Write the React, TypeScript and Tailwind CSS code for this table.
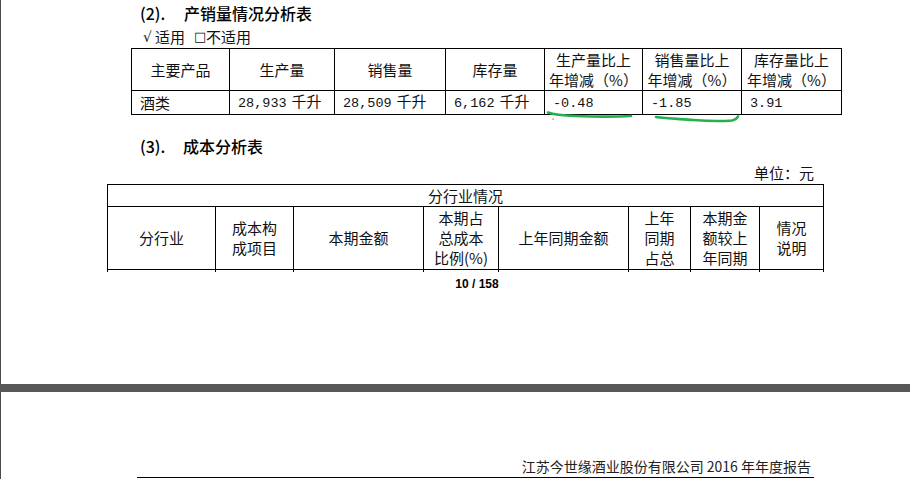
export default function App() {
  const cjk = "font-['Noto_Sans_CJK_SC',sans-serif]";
  const mono = "font-['Liberation_Mono','Noto_Sans_CJK_SC',monospace] text-[13.5px]";
  const th = "border border-black text-center align-middle font-normal p-0 leading-[20px]";
  const td = "border border-black text-left align-middle p-0 pl-[8px] whitespace-nowrap";
  const unit = <span className="text-[15px] ml-[5px]">千升</span>;
  return (
    <div className={`w-[910px] h-[479px] overflow-hidden bg-white text-[#111] ${cjk}`}>
      <div className="relative h-[384px] border-l border-[#4a4a4a]">
        <div className="pt-[3px] pl-[139px] h-[23px] leading-[20px] text-[16px] font-medium text-black flex">
          <span className="w-[44px]">(2).</span>
          <span>产销量情况分析表</span>
        </div>
        <div className="mt-[4px] pl-[142px] h-[20px] leading-[20px] text-[15px] flex items-center">
          <span className="w-[12px] text-[14px] font-['DejaVu_Sans',sans-serif]">√</span>
          <span>适用</span>
          <span className="ml-[9px] w-[12px] text-[13px] font-['DejaVu_Sans',sans-serif]">□</span>
          <span>不适用</span>
        </div>
        <table className="mt-[1px] ml-[130px] border-collapse table-fixed w-[710px] text-[15px] text-[#111]">
          <colgroup>
            <col className="w-[98px]" />
            <col className="w-[105px]" />
            <col className="w-[111px]" />
            <col className="w-[99px]" />
            <col className="w-[98px]" />
            <col className="w-[99px]" />
            <col className="w-[100px]" />
          </colgroup>
          <tbody>
            <tr className="h-[42px]">
              <th className={th}>主要产品</th>
              <th className={th}>生产量</th>
              <th className={th}>销售量</th>
              <th className={th}>库存量</th>
              <th className={th}>生产量比上<br />年增减（%）</th>
              <th className={th}>销售量比上<br />年增减（%）</th>
              <th className={th}>库存量比上<br />年增减（%）</th>
            </tr>
            <tr className="h-[22px] leading-[20px]">
              <td className={td}><span className="text-[15px]">酒类</span></td>
              <td className={td}><span className={mono}>28,933</span>{unit}</td>
              <td className={td}><span className={mono}>28,509</span>{unit}</td>
              <td className={td}><span className={mono}>6,162</span>{unit}</td>
              <td className={td}><span className={mono}>-0.48</span></td>
              <td className={td}><span className={mono}>-1.85</span></td>
              <td className={td}><span className={mono}>3.91</span></td>
            </tr>
          </tbody>
        </table>
        <div className="mt-[21px] pl-[139px] h-[20px] leading-[20px] text-[16px] font-medium text-black flex">
          <span className="w-[43px]">(3).</span>
          <span>成本分析表</span>
        </div>
        <div className="mt-[8px] h-[20px] leading-[18px] w-[813px] text-right text-[15px]">单位：元</div>
        <table className="ml-[106px] border-collapse table-fixed w-[716px] text-[15px] text-[#111]">
          <colgroup>
            <col className="w-[108px]" />
            <col className="w-[78px]" />
            <col className="w-[130px]" />
            <col className="w-[75px]" />
            <col className="w-[130px]" />
            <col className="w-[62px]" />
            <col className="w-[69px]" />
            <col className="w-[64px]" />
          </colgroup>
          <tbody>
            <tr className="h-[22px]">
              <th colSpan={8} className={th}>分行业情况</th>
            </tr>
            <tr className="h-[63px]">
              <th className={th}>分行业</th>
              <th className={th}>成本构<br />成项目</th>
              <th className={th}>本期金额</th>
              <th className={`${th} leading-[20.5px]`}>本期占<br />总成本<br />比例(%)</th>
              <th className={th}>上年同期金额</th>
              <th className={`${th} leading-[20.5px]`}>上年<br />同期<br />占总</th>
              <th className={`${th} leading-[20.5px]`}>本期金<br />额较上<br />年同期</th>
              <th className={th}>情况<br />说明</th>
            </tr>
            <tr className="h-[2px]">
              <td className="border-x border-black p-0"></td>
              <td className="border-x border-black p-0"></td>
              <td className="border-x border-black p-0"></td>
              <td className="border-x border-black p-0"></td>
              <td className="border-x border-black p-0"></td>
              <td className="border-x border-black p-0"></td>
              <td className="border-x border-black p-0"></td>
              <td className="border-x border-black p-0"></td>
            </tr>
          </tbody>
        </table>
        <div className="mt-[4px] h-[16px] leading-[16px] w-[952px] text-center text-[12px] font-bold text-black font-['Liberation_Sans',sans-serif]">10 / 158</div>
        <svg className="absolute left-0 top-0 pointer-events-none" width="910" height="130" viewBox="0 0 910 130">
          <path d="M547 112.5 C552 114.5 560 115.5 575 116 C595 116.8 615 116.8 630 116" fill="none" stroke="#22b14c" strokeWidth="2.6" strokeLinecap="round" />
          <path d="M655 117 C665 118.5 680 119 692 120 C705 121 720 121.5 731 120.5 C734 120 736 118.5 737 116.5" fill="none" stroke="#22b14c" strokeWidth="2.6" strokeLinecap="round" />
          <rect x="551.5" y="118.5" width="1.2" height="1.2" fill="#e03030" />
        </svg>
      </div>
      <div className="h-[8px] bg-[#585858]" />
      <div className="h-[87px] border-l border-[#4a4a4a] pt-[65px]">
        <div className="ml-[136px] w-[677px] border-b border-black text-right pr-[3px] pb-[2px] h-[21px] leading-[18px] text-[14px] text-[#222]">
          江苏今世缘酒业股份有限公司 2016 年年度报告
        </div>
      </div>
    </div>
  );
}
